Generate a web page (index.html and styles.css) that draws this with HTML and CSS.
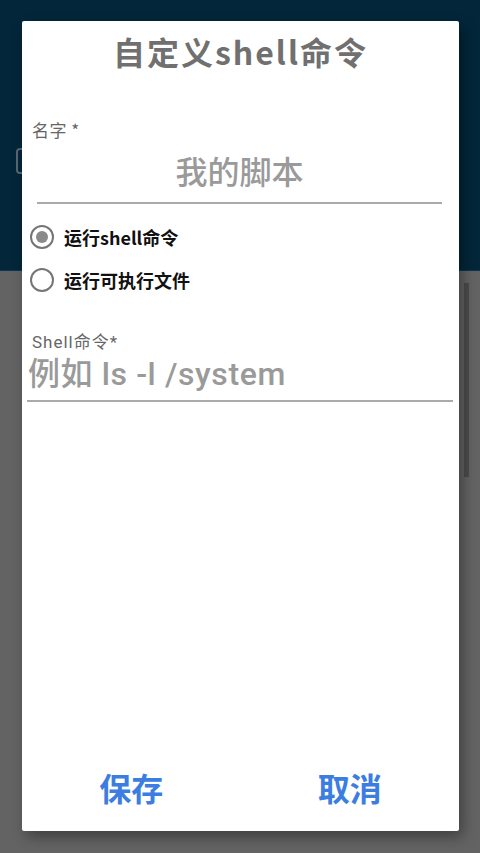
FILE: index.html
```html
<!DOCTYPE html>
<html lang="zh-CN">
<head>
<meta charset="utf-8">
<link rel="stylesheet" href="styles.css">
</head>
<body>
<div class="screen">
  <div class="appbar">
    <div class="ghost-box"></div>
  </div>
  <div class="content"></div>
  <div class="scrollbar"></div>

  <div class="dialog">
    <h1 class="title">自定义shell命令</h1>

    <div class="field-label label-name">名字 *</div>
    <div class="input input-name"><span class="hint">我的脚本</span></div>

    <div class="radios">
      <div class="radio-row">
        <span class="radio checked"><span class="dot"></span></span>
        <span class="radio-text">运行shell命令</span>
      </div>
      <div class="radio-row">
        <span class="radio"></span>
        <span class="radio-text">运行可执行文件</span>
      </div>
    </div>

    <div class="field-label label-shell">Shell命令*</div>
    <div class="input input-shell"><span class="hint">例如 ls -l /system</span></div>

    <div class="spacer"></div>

    <div class="actions">
      <div class="btn">保存</div>
      <div class="btn">取消</div>
    </div>
  </div>
</div>
</body>
</html>
```
FILE: styles.css
```css
html, body {
  margin: 0;
  padding: 0;
}
body {
  width: 480px;
  height: 853px;
  overflow: hidden;
  font-family: "Noto Sans CJK SC", "Noto Sans", sans-serif;
  background: #636363;
}
.screen {
  position: relative;
  width: 480px;
  height: 853px;
  display: flex;
  flex-direction: column;
}
.appbar {
  height: 271px;
  background: #03263a;
  border-bottom: 1px solid #0d3550;
  flex: none;
  padding-top: 148px;
  box-sizing: border-box;
}
.ghost-box {
  width: 14px;
  height: 26px;
  margin-left: 16px;
  border: 2px solid #5a6670;
  border-radius: 4px;
  box-sizing: border-box;
}
.content {
  flex: 1;
  background: #636363;
}
.scrollbar {
  position: absolute;
  left: 464px;
  top: 283px;
  width: 5px;
  height: 194px;
  background: #4b4b4b;
}
.dialog {
  position: absolute;
  left: 22px;
  top: 21px;
  width: 437px;
  height: 810px;
  background: #ffffff;
  border-radius: 2px;
  box-shadow: 4px 6px 14px rgba(0, 0, 0, 0.35);
  display: flex;
  flex-direction: column;
}
.title {
  margin: 0;
  padding-top: 9px;
  font-size: 32px;
  line-height: 42px;
  font-weight: 700;
  color: #707070;
  text-align: center;
  letter-spacing: 2px;
}
.field-label {
  font-size: 17px;
  line-height: 20px;
  color: #666666;
  padding-left: 10px;
  letter-spacing: 0.5px;
}
.label-name {
  margin-top: 48px;
}
.input {
  border-bottom: 2px solid #aaaaaa;
}
.hint {
  display: block;
  font-size: 32px;
  line-height: 34px;
  color: #9a9a9a;
  font-weight: 500;
}
.input-name {
  margin: 13px 17px 0 15px;
  text-align: center;
  padding-bottom: 15px;
}
.radios {
  display: flex;
  flex-direction: column;
  gap: 19px;
  margin-top: 21px;
  padding-left: 8px;
}
.radio-row {
  display: flex;
  align-items: center;
  gap: 10px;
  height: 24px;
}
.radio {
  width: 24px;
  height: 24px;
  border: 2px solid #757575;
  border-radius: 50%;
  box-sizing: border-box;
  display: flex;
  align-items: center;
  justify-content: center;
  flex: none;
}
.dot {
  width: 12px;
  height: 12px;
  border-radius: 50%;
  background: #8a8a8a;
}
.radio-text {
  font-size: 18px;
  font-weight: 700;
  color: #111111;
}
.label-shell {
  margin-top: 40px;
  font-family: Roboto, "Noto Sans CJK SC", sans-serif;
  letter-spacing: 1px;
}
.input-shell {
  margin: 5px 6px 0 5px;
  padding-left: 1px;
  padding-bottom: 9px;
}
.input-shell .hint {
  font-family: Roboto, "Noto Sans CJK SC", sans-serif;
  letter-spacing: 0.6px;
}
.spacer {
  flex: 1;
}
.actions {
  display: flex;
  height: 64px;
  align-items: flex-start;
}
.btn {
  flex: 1;
  text-align: center;
  font-size: 32px;
  line-height: 40px;
  font-weight: 700;
  color: #3b7de0;
}
```
